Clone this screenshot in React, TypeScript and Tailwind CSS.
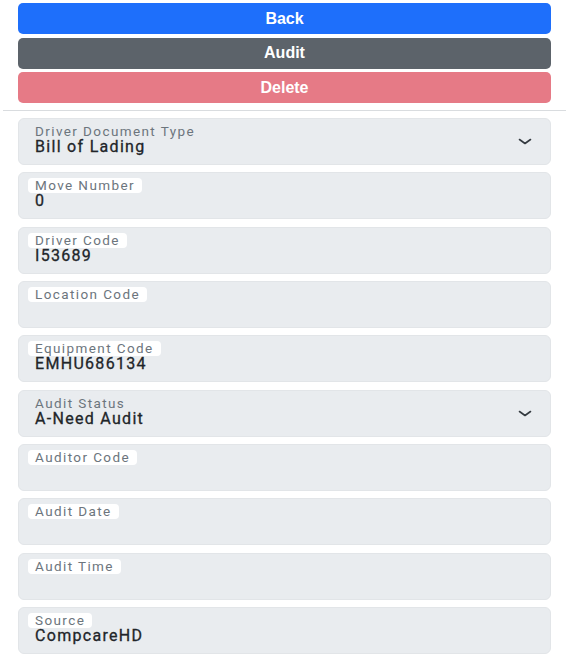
import React from "react";

type Field = { label: string; value?: string; select?: boolean };

const fields: Field[] = [
  { label: "Driver Document Type", value: "Bill of Lading", select: true },
  { label: "Move Number", value: "0" },
  { label: "Driver Code", value: "I53689" },
  { label: "Location Code" },
  { label: "Equipment Code", value: "EMHU686134" },
  { label: "Audit Status", value: "A-Need Audit", select: true },
  { label: "Auditor Code" },
  { label: "Audit Date" },
  { label: "Audit Time" },
  { label: "Source", value: "CompcareHD" },
];

function Chevron() {
  return (
    <svg
      className="absolute right-[18px] top-[18px]"
      width="14"
      height="9"
      viewBox="0 0 14 9"
      fill="none"
    >
      <path d="M1.5 2.5 L7 6.5 L12.5 2.5" stroke="#343a40" strokeWidth="1.6" strokeLinecap="round" strokeLinejoin="round" />
    </svg>
  );
}

export default function App() {
  return (
    <div className="min-h-[658px] w-[566px] bg-white font-['Roboto',sans-serif]">
      <div className="flex flex-col gap-[3.5px] pl-[18px] pr-[15px] pt-[3px] font-['Liberation_Sans',Arial,sans-serif] text-[16px] font-bold text-white">
        <button className="h-[31px] rounded-[5px] bg-[#1e6ffb]">Back</button>
        <button className="h-[31px] rounded-[5px] bg-[#5c636a]">Audit</button>
        <button className="h-[31px] rounded-[5px] bg-[#e67a86]">Delete</button>
      </div>

      <div className="ml-[3px] mt-[7px] h-px bg-[#d9dcdf]" />

      <div className="mt-[7px] flex flex-col gap-[7.35px] pl-[18px] pr-[15px]">
        {fields.map((f) => (
          <div
            key={f.label}
            className="relative h-[47px] rounded-[6px] border border-[#e2e5e8] bg-[#e9ecef] px-[16px] pt-[5px]"
          >
            <span
              className={
                "-ml-[7px] block w-fit rounded-[4px] px-[7px] text-[13.5px] leading-[15px] tracking-[1.4px] text-[#6c757d] " +
                (f.select ? "" : "bg-white")
              }
            >
              {f.label}
            </span>
            {f.value && (
              <div className="text-[16px] leading-[16px] tracking-[1.3px] text-[#212529] [-webkit-text-stroke:0.3px_#212529]">
                {f.value}
              </div>
            )}
            {f.select && <Chevron />}
          </div>
        ))}
      </div>
    </div>
  );
}
